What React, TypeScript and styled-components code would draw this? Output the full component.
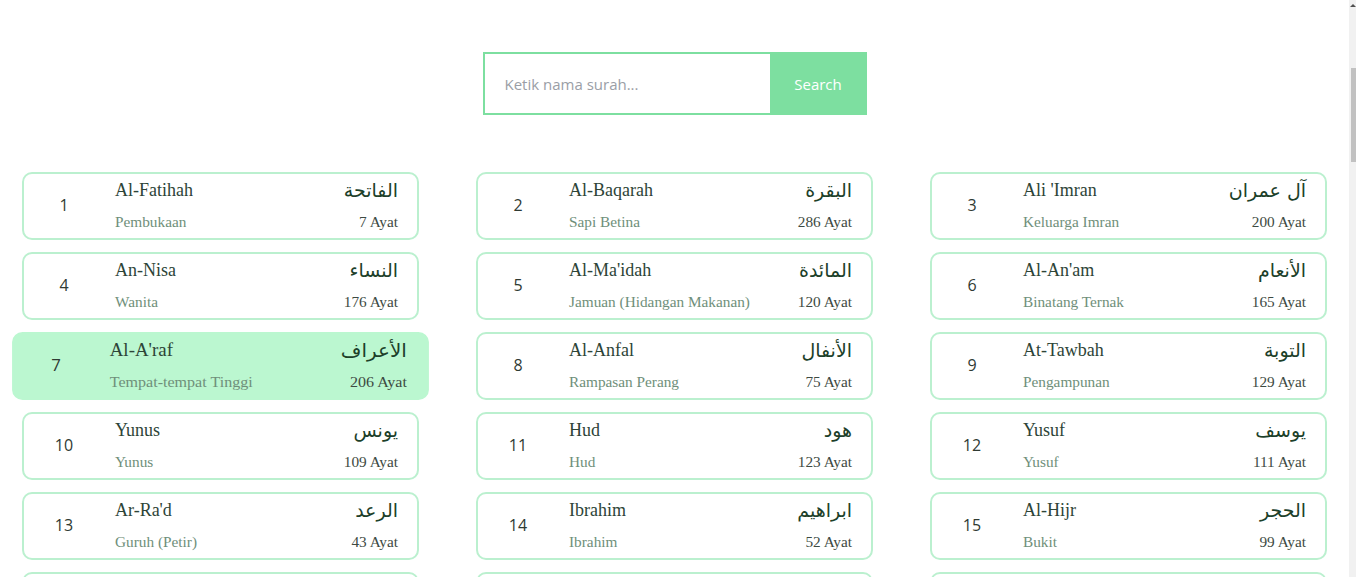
import React from "react";
import styled, { createGlobalStyle } from "styled-components";

const GlobalStyle = createGlobalStyle`
  html, body { margin: 0; padding: 0; background: #ffffff; }
  body { font-family: "Open Sans", "Liberation Sans", sans-serif; }
`;

type Surah = { no: number; name: string; arab: string; arti: string; ayat: number };

const DATA: Surah[] = [
  { no: 1, name: "Al-Fatihah", arab: "الفاتحة", arti: "Pembukaan", ayat: 7 },
  { no: 2, name: "Al-Baqarah", arab: "البقرة", arti: "Sapi Betina", ayat: 286 },
  { no: 3, name: "Ali 'Imran", arab: "آل عمران", arti: "Keluarga Imran", ayat: 200 },
  { no: 4, name: "An-Nisa", arab: "النساء", arti: "Wanita", ayat: 176 },
  { no: 5, name: "Al-Ma'idah", arab: "المائدة", arti: "Jamuan (Hidangan Makanan)", ayat: 120 },
  { no: 6, name: "Al-An'am", arab: "الأنعام", arti: "Binatang Ternak", ayat: 165 },
  { no: 7, name: "Al-A'raf", arab: "الأعراف", arti: "Tempat-tempat Tinggi", ayat: 206 },
  { no: 8, name: "Al-Anfal", arab: "الأنفال", arti: "Rampasan Perang", ayat: 75 },
  { no: 9, name: "At-Tawbah", arab: "التوبة", arti: "Pengampunan", ayat: 129 },
  { no: 10, name: "Yunus", arab: "يونس", arti: "Yunus", ayat: 109 },
  { no: 11, name: "Hud", arab: "هود", arti: "Hud", ayat: 123 },
  { no: 12, name: "Yusuf", arab: "يوسف", arti: "Yusuf", ayat: 111 },
  { no: 13, name: "Ar-Ra'd", arab: "الرعد", arti: "Guruh (Petir)", ayat: 43 },
  { no: 14, name: "Ibrahim", arab: "ابراهيم", arti: "Ibrahim", ayat: 52 },
  { no: 15, name: "Al-Hijr", arab: "الحجر", arti: "Bukit", ayat: 99 },
  { no: 16, name: "An-Nahl", arab: "النحل", arti: "Lebah", ayat: 128 },
  { no: 17, name: "Al-Isra'", arab: "الإسراء", arti: "Memperjalankan Malam", ayat: 111 },
  { no: 18, name: "Al-Kahf", arab: "الكهف", arti: "Goa", ayat: 110 },
  { no: 19, name: "Maryam", arab: "مريم", arti: "Maryam", ayat: 98 },
  { no: 20, name: "Ta-Ha", arab: "طه", arti: "Ta Ha", ayat: 135 },
  { no: 21, name: "Al-Anbiya", arab: "الأنبياء", arti: "Nabi-Nabi", ayat: 112 },
];

const Page = styled.main`
  padding: 52px 7px 40px 0;
`;

const Scrollbar = styled.div`
  position: fixed;
  top: 0;
  right: 0;
  width: 7px;
  height: 100vh;
  background: #f1f1f1;
  z-index: 10;
`;

const ScrollArrow = styled.div`
  margin: 4px auto 0;
  width: 0;
  height: 0;
  border-left: 3px solid transparent;
  border-right: 3px solid transparent;
  border-bottom: 3px solid #505050;
`;

const ScrollThumb = styled.div`
  position: absolute;
  top: 68px;
  right: 0;
  width: 5px;
  height: 94px;
  background: #c1c1c1;
`;

const SearchBar = styled.form`
  display: flex;
  justify-content: center;
  margin-bottom: 57px;
`;

const SearchInput = styled.input`
  width: 287px;
  height: 63px;
  box-sizing: border-box;
  border: 2px solid #7ddfa0;
  border-right: none;
  outline: none;
  padding: 0 20px;
  font-family: "Open Sans", "Liberation Sans", sans-serif;
  font-size: 15px;
  color: #333;
  background: #fff;
  &::placeholder { color: #9a9ea6; }
`;

const SearchButton = styled.button`
  width: 97px;
  height: 63px;
  border: none;
  background: #7ddfa0;
  color: #ffffff;
  font-family: "Open Sans", "Liberation Sans", sans-serif;
  font-size: 15px;
  cursor: pointer;
`;

const Grid = styled.section`
  display: grid;
  grid-template-columns: repeat(3, 1fr);
  column-gap: 57px;
  row-gap: 12px;
  padding: 0 22px;
`;

const Card = styled.article<{ $active?: boolean }>`
  display: grid;
  grid-template-columns: 80px 1fr;
  column-gap: 11px;
  height: 68px;
  box-sizing: border-box;
  border: 2px solid ${(p) => (p.$active ? "#bbf7d0" : "#bbf0cf")};
  background: ${(p) => (p.$active ? "#bbf7d0" : "#ffffff")};
  border-radius: 10px;
  padding: 4px 19px 6px 0;
  transform: ${(p) => (p.$active ? "scaleX(1.05)" : "none")};
`;

const Number = styled.div`
  display: flex;
  align-items: center;
  justify-content: center;
  font-family: "Open Sans", "Liberation Sans", sans-serif;
  font-size: 16px;
  color: #2f3a33;
`;

const Info = styled.div`
  display: flex;
  flex-direction: column;
  gap: 10px;
  min-width: 0;
`;

const Line = styled.div`
  display: flex;
  justify-content: space-between;
  align-items: center;
`;

const Title = styled.span`
  font-family: "Liberation Serif", "DejaVu Serif", serif;
  font-size: 18px;
  line-height: 24px;
  color: #2d4437;
`;

const Arab = styled.span`
  font-family: "DejaVu Sans", "Noto Sans", sans-serif;
  font-size: 19px;
  line-height: 24px;
  color: #1c4029;
`;

const Sub = styled.span`
  font-family: "Liberation Serif", "DejaVu Serif", serif;
  font-size: 15.3px;
  line-height: 20px;
  color: #6f8f7a;
`;

const Ayat = styled.span`
  font-family: "Liberation Serif", "DejaVu Serif", serif;
  font-size: 15.3px;
  line-height: 20px;
  color: #3d4a42;
`;

export default function App() {
  return (
    <>
      <GlobalStyle />
      <Scrollbar aria-hidden>
        <ScrollArrow />
        <ScrollThumb />
      </Scrollbar>
      <Page>
        <SearchBar onSubmit={(e) => e.preventDefault()}>
          <SearchInput placeholder="Ketik nama surah..." />
          <SearchButton type="submit">Search</SearchButton>
        </SearchBar>
        <Grid>
          {DATA.map((s) => (
            <Card key={s.no} $active={s.no === 7}>
              <Number>{s.no}</Number>
              <Info>
                <Line>
                  <Title>{s.name}</Title>
                  <Arab>{s.arab}</Arab>
                </Line>
                <Line>
                  <Sub>{s.arti}</Sub>
                  <Ayat>{s.ayat} Ayat</Ayat>
                </Line>
              </Info>
            </Card>
          ))}
        </Grid>
      </Page>
    </>
  );
}
